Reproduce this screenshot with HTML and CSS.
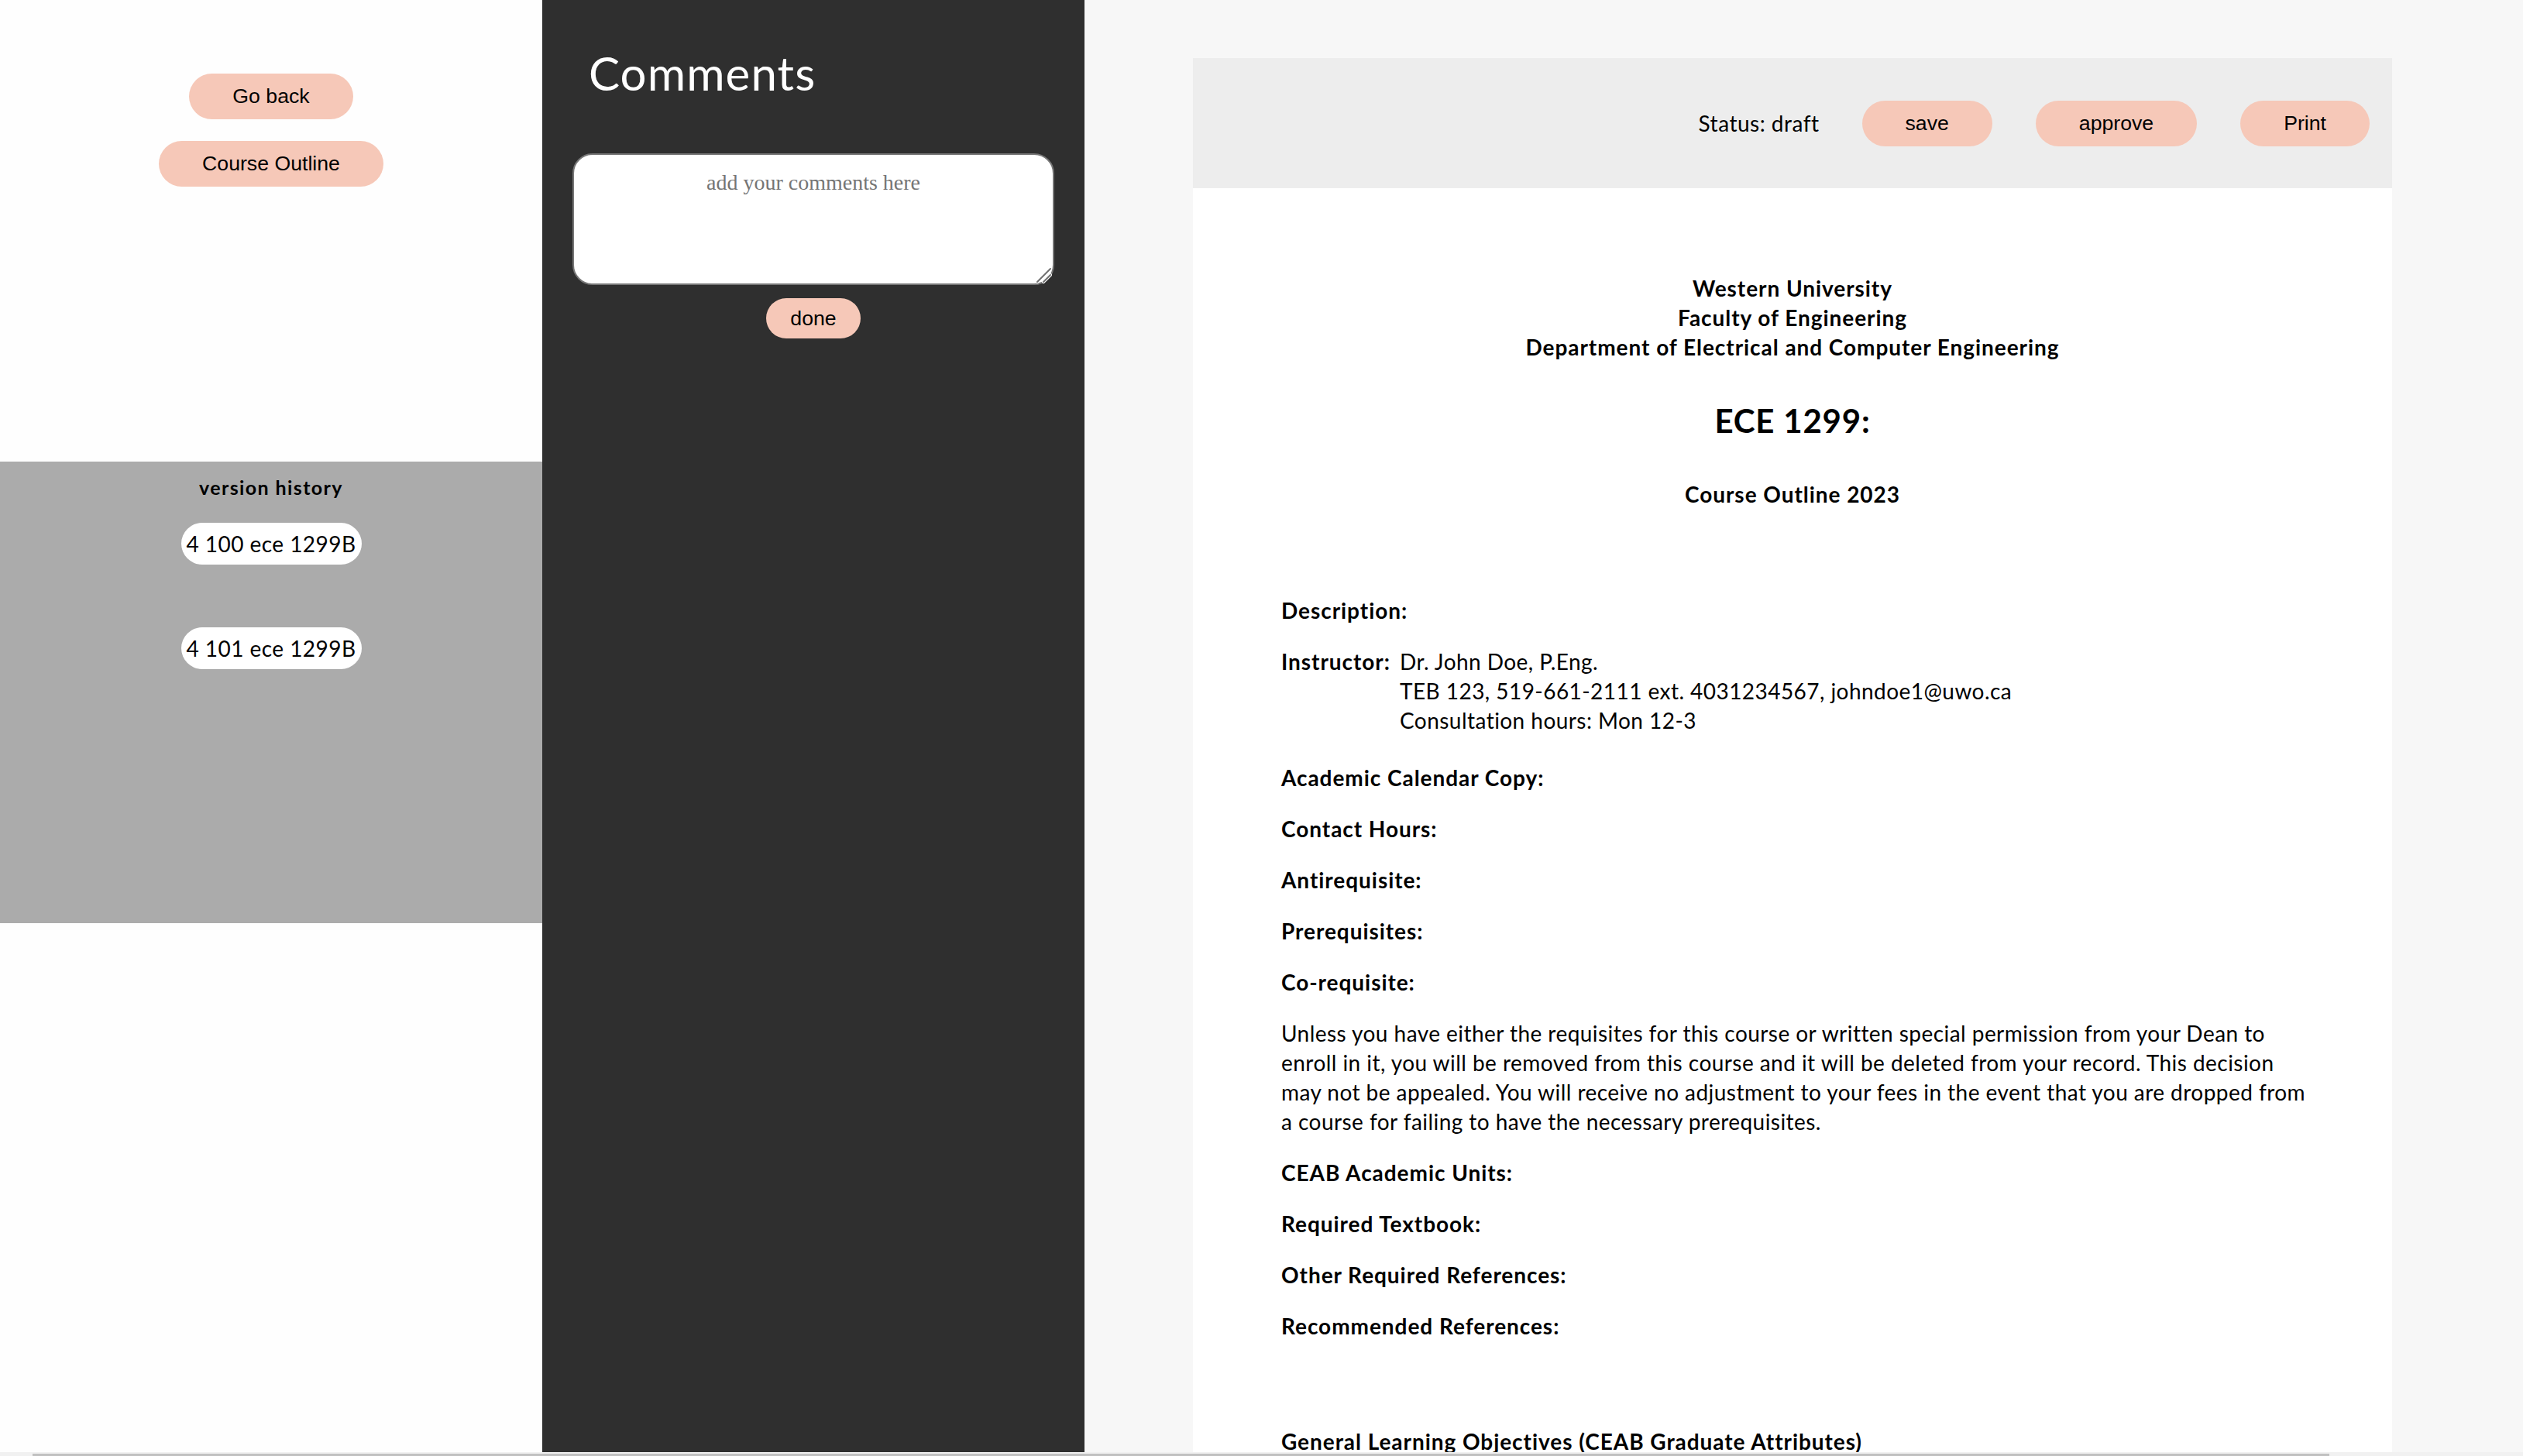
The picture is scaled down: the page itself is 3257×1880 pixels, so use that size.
FILE: index.html
```html
<!DOCTYPE html>
<html lang="en">
<head>
<meta charset="utf-8">
<title>Course Outline Editor</title>
<link rel="stylesheet" href="styles.css">
</head>
<body>
<div class="page">
  <div class="layout">
    <aside class="sidebar">
      <nav class="nav">
        <button class="btn">Go back</button>
        <button class="btn">Course Outline</button>
      </nav>
      <section class="versions">
        <h3 class="versions-title">version history</h3>
        <button class="version-pill">4 100 ece 1299B</button>
        <button class="version-pill version-pill-next">4 101 ece 1299B</button>
      </section>
    </aside>

    <section class="comments">
      <h1 class="comments-title">Comments</h1>
      <div class="comment-wrap">
        <textarea class="comment-box" placeholder="add your comments here"></textarea>
        <svg class="resizer" width="22" height="22" viewBox="0 0 22 22" aria-hidden="true">
          <path d="M3 20 L20 3" stroke="#ffffff" stroke-width="4" stroke-linecap="round"/>
          <path d="M11 20 L20 11" stroke="#ffffff" stroke-width="4" stroke-linecap="round"/>
          <path d="M3 20 L20 3" stroke="#6f6f6f" stroke-width="2" stroke-linecap="round"/>
          <path d="M11 20 L20 11" stroke="#6f6f6f" stroke-width="2" stroke-linecap="round"/>
        </svg>
      </div>
      <button class="btn btn-done">done</button>
    </section>

    <main class="main">
      <article class="card">
        <div class="toolbar">
          <span class="status">Status: draft</span>
          <button class="btn">save</button>
          <button class="btn">approve</button>
          <button class="btn">Print</button>
        </div>
        <div class="doc">
          <div class="doc-head">
            <div>Western University</div>
            <div>Faculty of Engineering</div>
            <div>Department of Electrical and Computer Engineering</div>
          </div>
          <h2 class="course-code">ECE 1299:</h2>
          <div class="course-title">Course Outline 2023</div>

          <div class="field field-first"><b>Description:</b></div>
          <div class="field instructor">
            <b>Instructor:</b>
            <div class="instructor-info">
              <div>Dr. John Doe, P.Eng.</div>
              <div>TEB 123, 519-661-2111 ext. 4031234567, johndoe1@uwo.ca</div>
              <div>Consultation hours: Mon 12-3</div>
            </div>
          </div>
          <div class="field field-after-instructor"><b>Academic Calendar Copy:</b></div>
          <div class="field"><b>Contact Hours:</b></div>
          <div class="field"><b>Antirequisite:</b></div>
          <div class="field"><b>Prerequisites:</b></div>
          <div class="field"><b>Co-requisite:</b></div>
          <p class="field notice">Unless you have either the requisites for this course or written special permission from your Dean to<br>enroll in it, you will be removed from this course and it will be deleted from your record. This decision<br>may not be appealed. You will receive no adjustment to your fees in the event that you are dropped from<br>a course for failing to have the necessary prerequisites.</p>
          <div class="field"><b>CEAB Academic Units:</b></div>
          <div class="field"><b>Required Textbook:</b></div>
          <div class="field"><b>Other Required References:</b></div>
          <div class="field"><b>Recommended References:</b></div>
          <div class="field field-objectives"><b>General Learning Objectives (CEAB Graduate Attributes)</b></div>
        </div>
      </article>
    </main>
  </div>
  <div class="hscroll"><div class="hscroll-thumb"></div></div>
</div>
</body>
</html>
```

FILE: styles.css
```css
html, body {
  margin: 0;
  padding: 0;
  overflow: hidden;
}

body {
  width: 3257px;
  height: 1880px;
  font-family: "Lato", "Noto Sans", sans-serif;
  color: #000;
}

.page {
  display: flex;
  flex-direction: column;
  width: 3257px;
  height: 1880px;
}

.layout {
  display: flex;
  height: 1875px;
  overflow: hidden;
}

/* ---------- buttons ---------- */
.btn {
  font-family: "Liberation Sans", Arial, sans-serif;
  font-size: 26.67px;
  line-height: 31px;
  height: 59px;
  padding: 0 56px;
  border: none;
  border-radius: 30px;
  background: #f6c8b8;
  color: #000;
  cursor: pointer;
}

/* ---------- sidebar ---------- */
.sidebar {
  width: 700px;
  flex: none;
  display: flex;
  flex-direction: column;
  background: #fefefe;
}

.nav {
  height: 596px;
  box-sizing: border-box;
  padding-top: 95px;
  display: flex;
  flex-direction: column;
  align-items: center;
  gap: 28px;
}

.versions {
  height: 596px;
  box-sizing: border-box;
  background: #ababab;
  padding-top: 17px;
  display: flex;
  flex-direction: column;
  align-items: center;
}

.versions-title {
  margin: 0;
  font-size: 25px;
  line-height: 32px;
  font-weight: 700;
  letter-spacing: 1.4px;
}

.version-pill {
  margin-top: 30px;
  width: 233px;
  height: 54px;
  padding: 0;
  border: none;
  border-radius: 27px;
  background: #fff;
  font-family: "Lato", "Noto Sans", sans-serif;
  font-size: 28px;
  letter-spacing: 0.45px;
  color: #000;
}

.version-pill-next {
  margin-top: 81px;
}

/* ---------- comments ---------- */
.comments {
  width: 700px;
  flex: none;
  background: #2f2f2f;
  display: flex;
  flex-direction: column;
  padding-top: 58px;
  box-sizing: border-box;
}

.comments-title {
  margin: 0 0 0 60px;
  font-size: 60px;
  line-height: 72px;
  font-weight: 400;
  letter-spacing: 1.1px;
  color: #fff;
}

.comment-wrap {
  position: relative;
  margin: 68px 39px 0;
  width: 622px;
  height: 170px;
}

.comment-box {
  display: block;
  width: 622px;
  height: 170px;
  box-sizing: border-box;
  border: 2px solid #767676;
  border-radius: 26px;
  padding: 20px 24px;
  background: #fff;
  font-family: "Liberation Serif", "Times New Roman", serif;
  font-size: 28px;
  text-align: center;
  outline: none;
  resize: none;
}

.comment-box::placeholder {
  color: #757575;
}

.resizer {
  position: absolute;
  right: 3px;
  bottom: 2px;
}

.btn-done {
  align-self: center;
  margin-top: 17px;
  height: 52px;
  padding: 0 31px;
  border-radius: 26px;
}

/* ---------- main / document ---------- */
.main {
  flex: 1;
  background: #f7f7f7;
  padding: 75px 0 0 140px;
  box-sizing: border-box;
  overflow: hidden;
}

.card {
  width: 1548px;
  height: 1800px;
  background: #fff;
  overflow: hidden;
}

.toolbar {
  height: 168px;
  background: #ededed;
  display: flex;
  justify-content: flex-end;
  align-items: center;
  gap: 56px;
  padding-right: 29px;
}

.status {
  font-size: 28px;
  letter-spacing: 0.5px;
  margin-right: -1px;
}

.doc {
  padding: 0 114px;
  font-size: 28px;
  line-height: 38px;
  letter-spacing: 0.45px;
}

.doc b,
.doc-head,
.course-title {
  letter-spacing: 0.95px;
}

.doc-head {
  margin-top: 110px;
  text-align: center;
  font-weight: 700;
}

.course-code {
  margin: 51px 0 0;
  text-align: center;
  font-size: 42px;
  line-height: 50px;
  font-weight: 700;
  letter-spacing: 0.8px;
}

.course-title {
  margin-top: 51px;
  text-align: center;
  font-weight: 700;
}

.field {
  margin: 28px 0 0;
}

.field-first {
  margin-top: 112px;
}

.instructor {
  display: grid;
  grid-template-columns: 153px 1fr;
}

.field-after-instructor {
  margin-top: 36px;
}

.notice {
  margin-bottom: 0;
  white-space: nowrap;
}

.field-objectives {
  margin-top: 111px;
}

/* ---------- horizontal scrollbar strip ---------- */
.hscroll {
  height: 5px;
  box-sizing: border-box;
  background: #f1f1f1;
  padding: 2px 0 0 42px;
}

.hscroll-thumb {
  width: 2965px;
  height: 3px;
  background: #c1c1c1;
}
```
